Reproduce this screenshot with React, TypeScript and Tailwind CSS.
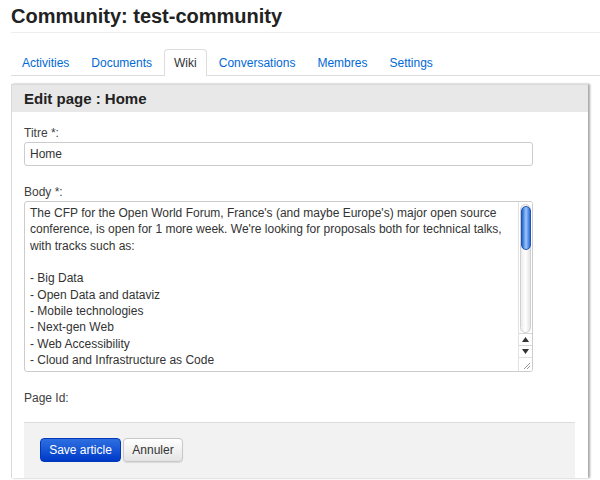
import React from "react";

const tabs = ["Activities", "Documents", "Wiki", "Conversations", "Membres", "Settings"];

const bodyLines = [
  "The CFP for the Open World Forum, France's (and maybe Europe's) major open source",
  "conference, is open for 1 more week. We're looking for proposals both for technical talks,",
  "with tracks such as:",
  "",
  "- Big Data",
  "- Open Data and dataviz",
  "- Mobile technologies",
  "- Next-gen Web",
  "- Web Accessibility",
  "- Cloud and Infrastructure as Code",
];

function Scrollbar() {
  return (
    <div className="flex h-full w-[14px] shrink-0 flex-col border-l border-[#e2e2e2] bg-white">
      {/* track */}
      <div className="mx-[1px] mt-[2px] flex flex-1 flex-col items-center rounded-full border border-[#d0d0d0] bg-gradient-to-r from-[#ececec] via-white to-[#e4e4e4]">
        <div className="mt-[1px] h-[44px] w-[10px] rounded-full border border-[#1f55b8] bg-gradient-to-r from-[#1f62d0] via-[#9cc6fa] to-[#2a6ad6]" />
      </div>
      {/* arrows */}
      <div className="flex h-[12px] items-center justify-center border-t border-[#d6d6d6]">
        <svg width="7" height="5" viewBox="0 0 7 5">
          <path d="M3.5 0 L7 5 L0 5 Z" fill="#333" />
        </svg>
      </div>
      <div className="flex h-[12px] items-center justify-center border-t border-[#d6d6d6]">
        <svg width="7" height="5" viewBox="0 0 7 5">
          <path d="M0 0 L7 0 L3.5 5 Z" fill="#333" />
        </svg>
      </div>
      <div className="relative h-[14px] border-t border-[#e2e2e2]">
        <svg className="absolute right-[1px] bottom-[1px]" width="9" height="9" viewBox="0 0 9 9">
          <path d="M8 2 L2 8 M8 5 L5 8" stroke="#999" strokeWidth="1" />
        </svg>
      </div>
    </div>
  );
}

export default function App() {
  return (
    <div
      className="h-[480px] w-[600px] overflow-hidden bg-white pl-[11px] text-[12px] text-[#404040]"
      style={{ fontFamily: '"Liberation Sans", Arial, Helvetica, sans-serif' }}
    >
      {/* Page title */}
      <h1 className="h-[33px] border-b border-[#eeeeee] pt-[3px] text-[20px] font-bold leading-[26px] text-[#222]">
        Community: test-community
      </h1>

      {/* Tabs */}
      <ul className="mt-[16px] flex h-[27px] border-b border-[#dddddd] pl-[1px]">
        {tabs.map((t) => (
          <li key={t} className="mr-[2px]">
            {t === "Wiki" ? (
              <span className="-mb-px block h-[27px] rounded-t-[4px] border border-b-0 border-[#dddddd] bg-white px-[9px] leading-[26px] text-[#333]">
                {t}
              </span>
            ) : (
              <span className="block h-[26px] border border-transparent px-[9px] leading-[26px] text-[#0069d6]">
                {t}
              </span>
            )}
          </li>
        ))}
      </ul>

      {/* Panel */}
      <div className="mt-[8px] w-[577px] border-t border-l border-[#dadada] shadow-[2px_0_2px_rgba(0,0,0,0.35)]">
        <div className="h-[27px] bg-[#e8e8e8] pl-[12px] text-[15px] font-bold leading-[28px] text-[#222]">
          Edit page : Home
        </div>

        <div className="pt-[12px] pl-[12px]">
          <label className="block leading-[18px]">Titre *:</label>
          <div className="h-[24px] w-[509px] rounded-[3px] border border-[#cccccc] pl-[5px] leading-[22px] text-[#333]">
            Home
          </div>

          <label className="mt-[17px] block leading-[18px]">Body *:</label>
          <div className="flex h-[171px] w-[509px] overflow-hidden rounded-[3px] border border-[#cccccc]">
            <div className="min-w-0 flex-1 overflow-hidden whitespace-pre pt-[3px] pl-[5px] leading-[16.33px] text-[#333]">
              {bodyLines.map((l, i) => (
                <div key={i} className="h-[16.33px]">
                  {l}
                </div>
              ))}
            </div>
            <Scrollbar />
          </div>

          <label className="mt-[17px] block leading-[18px]">Page Id:</label>

          <div className="mt-[15px] flex h-[56px] w-[551px] gap-[2px] border-t border-[#dddddd] bg-[#f2f2f2] pt-[15px] pl-[16px]">
            <button className="h-[24px] w-[81px] rounded-[4px] border border-[#0038b8] bg-gradient-to-b from-[#2e6fe0] to-[#0038c8] text-[12px] text-white">
              Save article
            </button>
            <button className="h-[24px] w-[60px] rounded-[4px] border border-[#c8c8c8] bg-gradient-to-b from-white to-[#e4e4e4] text-[12px] text-[#333] shadow-[0_1px_1px_rgba(0,0,0,0.1)]">
              Annuler
            </button>
          </div>
        </div>
      </div>
    </div>
  );
}
